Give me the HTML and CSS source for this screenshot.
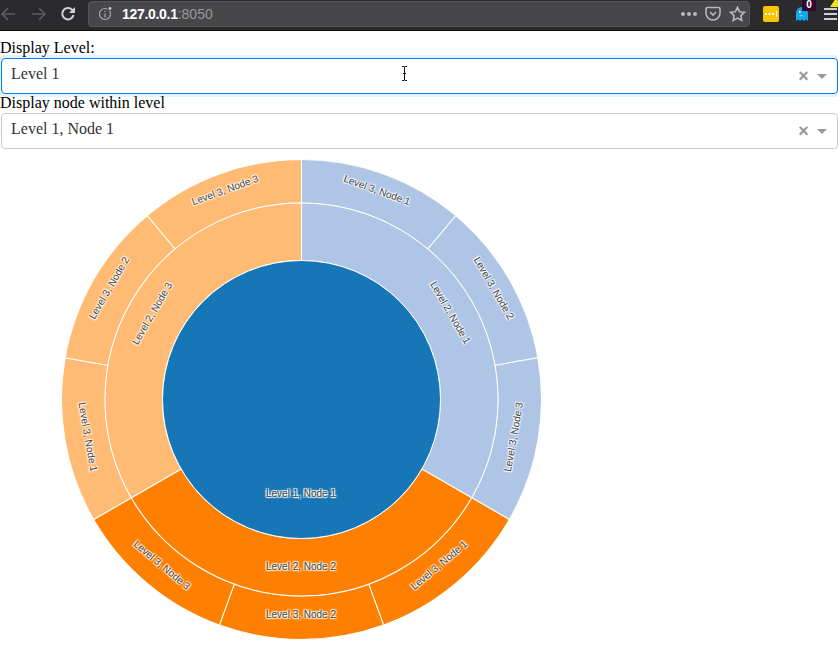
FILE: index.html
```html
<!DOCTYPE html>
<html lang="en">
<head>
  <meta charset="UTF-8" />
  <title>Dash</title>
  <link rel="stylesheet" href="styles.css">
</head>
<body>

<!-- Browser toolbar -->
<div class="toolbar">
  <div class="nav-buttons">
    <svg width="18" height="16" viewBox="0 0 18 16"><path class="nav-off" d="M15 8H2M8 2L2 8l6 6"/></svg>
    <svg width="18" height="16" viewBox="0 0 18 16"><path class="nav-off" d="M2 8h13M9 2l6 6-6 6"/></svg>
    <svg width="16" height="16" viewBox="0 0 16 16"><path class="nav-on" d="M13.5 9a5.7 5.7 0 1 1-1.4-5.2L14 5.500"/><path class="nav-fill" d="M15 1v6H9z"/></svg>
  </div>
  <div class="urlbar">
    <svg class="info-icon" width="15" height="15" viewBox="0 0 15 15"><circle cx="7" cy="8" r="5.500"/><path d="M7 7.500v4M7 4.800v1.200"/><circle class="info-dot" cx="12" cy="2.500" r="2"/></svg>
    <span class="url"><span class="host">127.0.0.1</span>:8050</span>
    <div class="url-actions">
      <span class="dots"><i></i><i></i><i></i></span>
      <svg width="16" height="16" viewBox="0 0 16 16"><path class="bar-icon" d="M2.500 1.500h11a1.500 1.500 0 0 1 1.500 1.500v4a7 7 0 0 1-14 0V3a1.500 1.500 0 0 1 1.500-1.500zM5 6l3 3 3-3"/></svg>
      <svg width="17" height="16" viewBox="0 0 17 16"><path class="bar-icon" d="M8.500 1.300l2.100 4.400 4.800.6-3.500 3.300.9 4.800-4.300-2.300-4.300 2.300.9-4.800L1.600 6.300l4.800-.6z"/></svg>
    </div>
  </div>
  <div class="extensions">
    <div class="ext-yellow">
      <svg width="14" height="6" viewBox="0 0 14 6"><path d="M1 2h2v2H1zM4.500 2h2v2h-2zM8 2h2v2H8zM12 0h1v6h-1z"/></svg>
    </div>
    <div class="ext-ghost">
      <svg width="14" height="16" viewBox="0 0 14 16"><path d="M1 7a6 6 0 0 1 12 0v8l-2-1.500L9 15l-2-1.500L5 15l-2-1.500L1 15z"/><path class="ghost-face" d="M4 5h1.500v2H4zM4 9.500q2 1.500 4 0"/></svg>
      <span class="ghost-badge">0</span>
    </div>
    <div class="menu-btn"><i></i><i></i><i></i><span class="menu-flag"></span></div>
  </div>
</div>

<div class="page">
  <div class="field-label">Display Level:</div>
  <div class="dropdown is-focused">
    <span class="dropdown-value">Level 1</span>
    <span class="dropdown-clear">×</span>
    <span class="dropdown-arrow"></span>
    <svg class="text-cursor" width="7" height="15" viewBox="0 0 7 15"><path d="M1 .5h2l.5.5.5-.5h2M3.500 1v13M1 14.500h2l.5-.5.5.5h2M2 7.500h3"/></svg>
  </div>
  <div class="field-label">Display node within level</div>
  <div class="dropdown">
    <span class="dropdown-value">Level 1, Node 1</span>
    <span class="dropdown-clear">×</span>
    <span class="dropdown-arrow"></span>
  </div>

  <!-- Sunburst -->
  <svg class="sunburst" width="838" height="500" viewBox="0 0 838 500">
    <defs>
      <path id="wedge2" d="M0 -196.500A196.500 196.500 0 0 1 170.170 98.250L120.380 69.500A139 139 0 0 0 0 -139Z"/>
      <path id="wedge3" d="M0 -240A240 240 0 0 1 154.270 -183.850L126.310 -150.530A196.500 196.500 0 0 0 0 -196.500Z"/>
    </defs>
    <g class="slices" transform="translate(301.500 250.500)">
      <use href="#wedge3" class="c-blue" transform="rotate(0)"/>
      <use href="#wedge3" class="c-blue" transform="rotate(40)"/>
      <use href="#wedge3" class="c-blue" transform="rotate(80)"/>
      <use href="#wedge3" class="c-orange" transform="rotate(120)"/>
      <use href="#wedge3" class="c-orange" transform="rotate(160)"/>
      <use href="#wedge3" class="c-orange" transform="rotate(200)"/>
      <use href="#wedge3" class="c-peach" transform="rotate(240)"/>
      <use href="#wedge3" class="c-peach" transform="rotate(280)"/>
      <use href="#wedge3" class="c-peach" transform="rotate(320)"/>
      <use href="#wedge2" class="c-blue" transform="rotate(0)"/>
      <use href="#wedge2" class="c-orange" transform="rotate(120)"/>
      <use href="#wedge2" class="c-peach" transform="rotate(240)"/>
      <circle class="c-root" r="139"/>
    </g>
    <g class="labels">
      <text transform="translate(377 41) rotate(20)">Level 3, Node 1</text>
      <text transform="translate(494 139) rotate(60)">Level 3, Node 2</text>
      <text transform="translate(513.500 288) rotate(-80)">Level 3, Node 3</text>
      <text transform="translate(450.500 163.500) rotate(60)">Level 2, Node 1</text>
      <text transform="translate(439 416) rotate(-40)">Level 3, Node 1</text>
      <text transform="translate(301 465.500)">Level 3, Node 2</text>
      <text transform="translate(162 416) rotate(40)">Level 3, Node 3</text>
      <text transform="translate(301 417)">Level 2, Node 2</text>
      <text transform="translate(88 288) rotate(80)">Level 3, Node 1</text>
      <text transform="translate(109 139) rotate(-60)">Level 3, Node 2</text>
      <text transform="translate(225 41) rotate(-20)">Level 3, Node 3</text>
      <text transform="translate(152 164.500) rotate(-60)">Level 2, Node 3</text>
      <text transform="translate(301 344.500)">Level 1, Node 1</text>
    </g>
  </svg>
</div>

</body>
</html>
```

FILE: styles.css
```css
body {
  margin: 0;
  font-family: "Liberation Serif", serif;
  font-size: 16px;
  background-color: #fff;
  overflow: hidden;
}

/* browser toolbar */
.toolbar {
  display: flex;
  align-items: center;
  height: 30px;
  box-sizing: content-box;
  background-color: #2b2a2d;
  border-bottom: 1px solid #0c0c0d;
}

.nav-buttons {
  display: flex;
  align-items: center;
  gap: 12px;
  width: 88px;
  flex: none;
  margin-bottom: 2px;
}

.nav-off {
  fill: none;
  stroke: #5c5b66;
  stroke-width: 1.600;
}

.nav-on {
  fill: none;
  stroke: #d2d2d4;
  stroke-width: 2;
}

.nav-fill {
  fill: #d2d2d4;
}

.urlbar {
  display: flex;
  align-items: center;
  width: 243px;
  flex: 1 0 auto;
  height: 26px;
  box-sizing: border-box;
  margin-bottom: 3px;
  padding: 0 3px 0 9px;
  background-color: #474749;
  border: 1px solid #56565a;
  border-radius: 4px;
}

.info-icon {
  margin-right: 9px;
  fill: none;
  stroke: #a9a9ab;
  stroke-width: 1.200;
}

.info-icon .info-dot {
  fill: #d4d4d6;
  stroke: #474749;
}

.url {
  font-family: "Liberation Sans", sans-serif;
  font-size: 14px;
  color: #97979a;
}

.host {
  color: #fff;
  font-weight: bold;
  letter-spacing: -0.3px;
}

.url-actions {
  display: flex;
  align-items: center;
  gap: 8px;
  margin-left: auto;
}

.dots {
  display: flex;
  gap: 2px;
}

.dots i {
  width: 4px;
  height: 4px;
  border-radius: 50%;
  background-color: #b9b9bb;
}

.bar-icon {
  fill: none;
  stroke: #b9b9bb;
  stroke-width: 1.600;
}

.extensions {
  display: flex;
  align-items: center;
  flex: none;
  width: 88px;
  position: relative;
  height: 30px;
  padding-bottom: 2px;
  box-sizing: border-box;
}

.ext-yellow {
  display: flex;
  align-items: center;
  justify-content: center;
  width: 16px;
  height: 16px;
  margin-left: 13px;
  background-color: #f8c600;
  border-radius: 2px;
}

.ext-yellow path {
  fill: #fff;
}

.ext-ghost {
  position: relative;
  margin-left: 16px;
  height: 16px;
}

.ext-ghost path {
  fill: #10a8ea;
}

.ext-ghost .ghost-face {
  fill: #fff;
}

.ghost-badge {
  position: absolute;
  top: -7px;
  left: 7px;
  width: 14px;
  height: 12px;
  background-color: #33082f;
  color: #fff;
  font-family: "Liberation Sans", sans-serif;
  font-size: 10px;
  font-weight: bold;
  line-height: 12px;
  text-align: center;
}

.menu-btn {
  position: relative;
  display: flex;
  flex-direction: column;
  gap: 3px;
  width: 13px;
  margin-left: 15px;
}

.menu-btn i {
  height: 2px;
  background-color: #cfcfd1;
}

.menu-flag {
  position: absolute;
  top: -10px;
  left: 6px;
  width: 0;
  height: 0;
  border-left: 6px solid transparent;
  border-right: 6px solid transparent;
  border-bottom: 9px solid #f5e211;
}

/* page */
.page {
  padding-top: 8px;
}

.field-label {
  height: 19px;
  line-height: 17px;
  color: #000;
}

.dropdown {
  position: relative;
  display: flex;
  align-items: center;
  height: 36px;
  box-sizing: border-box;
  margin-left: 1px;
  padding-left: 9px;
  border: 1px solid #ccc;
  border-radius: 4px;
  color: #333;
}

.dropdown.is-focused {
  border-color: #007eff;
  box-shadow: 0 0 0 3px rgba(0, 126, 255, 0.1);
}

.dropdown-value {
  flex: 1;
  padding-bottom: 5px;
}

.dropdown-clear {
  width: 17px;
  color: #999;
  font-family: "Liberation Sans", sans-serif;
  font-size: 18px;
  font-weight: bold;
  line-height: 1;
  text-align: center;
}

.dropdown-arrow {
  width: 0;
  height: 0;
  margin: 0 10px 0 5px;
  border-left: 5px solid transparent;
  border-right: 5px solid transparent;
  border-top: 5px solid #999;
}

.text-cursor {
  position: absolute;
  top: 7px;
  left: 399px;
  fill: none;
  stroke: #111;
  stroke-width: 1;
}

/* sunburst */
.sunburst {
  display: block;
}

.slices use,
.slices circle {
  stroke: #fff;
  stroke-width: 1;
}

.c-blue { fill: #aec5e6; }
.c-orange { fill: #ff8000; }
.c-peach { fill: #ffbb74; }
.c-root { fill: #1777b6; }

.labels text {
  font-family: "Liberation Sans", sans-serif;
  font-size: 10px;
  fill: #444;
  text-anchor: middle;
  dominant-baseline: central;
  text-shadow: 1px 1px 1px #fff, -1px -1px 1px #fff, 1px -1px 1px #fff, -1px 1px 1px #fff;
}
```
